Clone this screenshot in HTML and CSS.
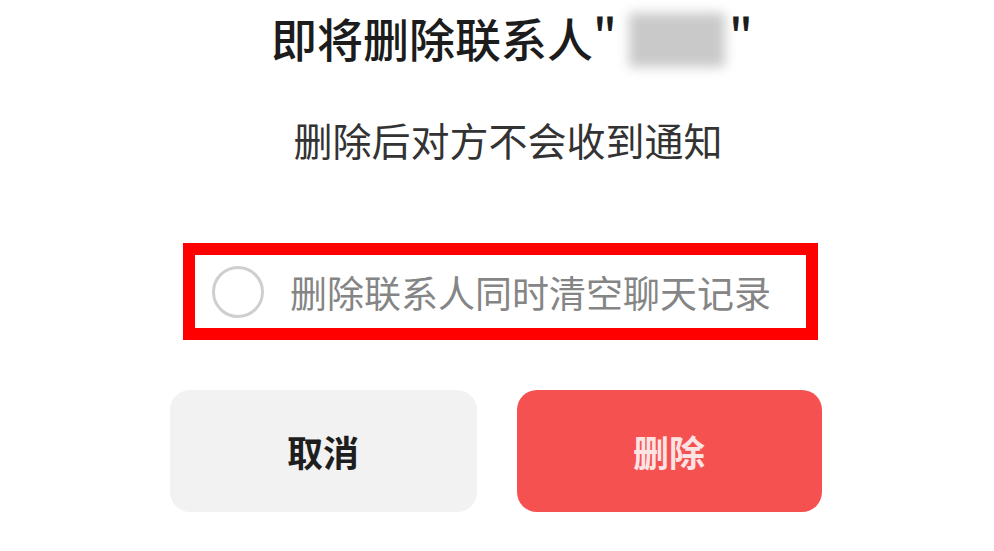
FILE: index.html
```html
<!DOCTYPE html>
<html lang="zh-CN">
<head>
<meta charset="utf-8">
<title>删除联系人</title>
<link rel="stylesheet" href="styles.css">
</head>
<body>
<div class="dialog">
  <h1 class="title">即将删除联系人"<span class="blur-name"></span>"</h1>
  <p class="subtitle">删除后对方不会收到通知</p>
  <div class="option-frame">
    <span class="radio"></span>
    <span class="option-text">删除联系人同时清空聊天记录</span>
  </div>
  <div class="actions">
    <button class="btn btn-cancel">取消</button>
    <button class="btn btn-delete">删除</button>
  </div>
</div>
</body>
</html>
```

FILE: styles.css
```css
html, body {
  margin: 0;
  padding: 0;
  background: #ffffff;
}
body {
  width: 994px;
  height: 551px;
  overflow: hidden;
  font-family: "Noto Sans CJK SC", "Noto Sans", sans-serif;
}
.dialog {
  display: flex;
  flex-direction: column;
  align-items: center;
}
.title {
  margin: 0;
  height: 74px;
  line-height: 74px;
  font-size: 46px;
  font-weight: 500;
  color: #1c1c1c;
  display: flex;
  align-items: center;
  padding-left: 30px;
  white-space: nowrap;
}
.blur-name {
  display: inline-block;
  width: 96px;
  height: 54px;
  margin: 6px 4px 0 12px;
  background: #c9c9c9;
  filter: blur(6px);
}
.subtitle {
  margin: 40px 0 0 0;
  height: 50px;
  line-height: 50px;
  font-size: 39px;
  color: #333333;
  padding-left: 22px;
  white-space: nowrap;
}
.option-frame {
  margin: 79px 0 0 7px;
  box-sizing: border-box;
  width: 635px;
  height: 97px;
  border: 12px solid #ff0000;
  display: flex;
  align-items: center;
  padding-left: 17px;
}
.radio {
  box-sizing: border-box;
  width: 52px;
  height: 52px;
  border-radius: 50%;
  border: 3px solid #cfcfcf;
  flex: none;
}
.option-text {
  margin-left: 26px;
  font-size: 37px;
  color: #858585;
  white-space: nowrap;
}
.actions {
  margin: 50px 0 0 -3px;
  display: flex;
  gap: 40px;
}
.btn {
  border: none;
  height: 122px;
  border-radius: 20px;
  font-family: "Noto Sans CJK SC", "Noto Sans", sans-serif;
  font-size: 36px;
  font-weight: 700;
}
.btn-cancel {
  width: 307px;
  background: #f2f2f2;
  color: #1e1e1e;
}
.btn-delete {
  width: 305px;
  background: #f65151;
  color: #fde4e4;
}
```
